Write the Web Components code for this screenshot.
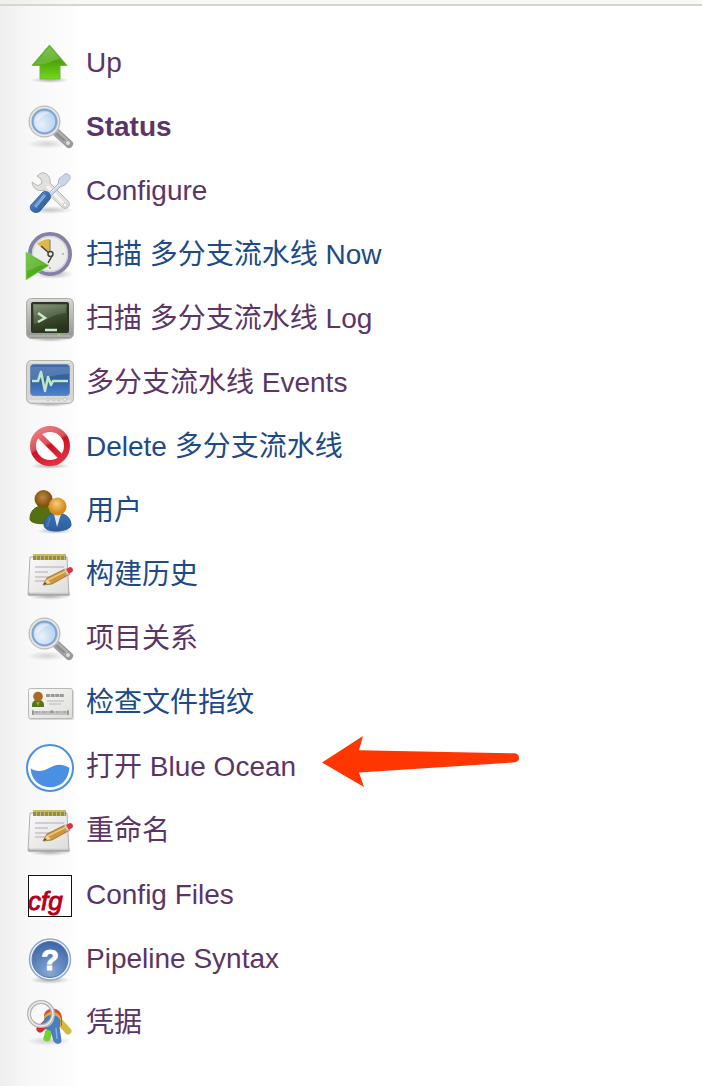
<!DOCTYPE html>
<html lang="zh-CN">
<head>
<meta charset="utf-8">
<meta name="viewport" content="width=device-width, initial-scale=1">
<title>多分支流水线</title>
<style>
  html, body { margin: 0; min-height: 100%; background: #fff; }
  body { font-family: "Liberation Sans", "Noto Sans CJK SC", sans-serif; }
</style>
</head>
<body>
<side-panel>
  <task-link icon="up">Up</task-link>
  <task-link icon="search" current>Status</task-link>
  <task-link icon="tools">Configure</task-link>
  <task-link icon="clock" fresh>扫描 多分支流水线 Now</task-link>
  <task-link icon="terminal">扫描 多分支流水线 Log</task-link>
  <task-link icon="monitor">多分支流水线 Events</task-link>
  <task-link icon="remove" fresh>Delete 多分支流水线</task-link>
  <task-link icon="users" fresh>用户</task-link>
  <task-link icon="notepad" fresh>构建历史</task-link>
  <task-link icon="search">项目关系</task-link>
  <task-link icon="card" fresh>检查文件指纹</task-link>
  <task-link icon="ocean">打开 Blue Ocean<callout-arrow slot="note"></callout-arrow></task-link>
  <task-link icon="notepad">重命名</task-link>
  <task-link icon="config">Config Files</task-link>
  <task-link icon="help">Pipeline Syntax</task-link>
  <task-link icon="keys">凭据</task-link>
</side-panel>

<script>
const shadowDef = '<radialGradient id="sh"><stop stop-color="#000" stop-opacity=".3"/><stop offset="1" stop-color="#000" stop-opacity="0"/></radialGradient>';

const icons = {
  up: `<defs>${shadowDef}<linearGradient id="g" x2="0" y2="1"><stop stop-color="#65b82b"/><stop offset=".5" stop-color="#4ea50c"/><stop offset="1" stop-color="#76d81c"/></linearGradient></defs>
    <ellipse cx="24" cy="40" rx="19" ry="3" fill="url(#sh)"/>
    <path d="M23.500 5 41 25.500H34V39H14V25.500H6Z" fill="url(#g)" stroke="#6fb544" stroke-linejoin="round"/>
    <path d="M23.500 7 8 24.500h7c9-1 13-5 19-6Z" fill="#fff" opacity=".17"/>`,
  search: `<defs>${shadowDef}<radialGradient id="g" cx=".4" cy=".6"><stop stop-color="#e9f2fb"/><stop offset="1" stop-color="#b9d2ee"/></radialGradient></defs>
    <ellipse cx="21" cy="40" rx="20" ry="5" fill="url(#sh)" opacity=".5"/>
    <path d="m30 28 13 12" stroke="#999" stroke-width="8" stroke-linecap="round"/>
    <path d="m30 28 12 11" stroke="#b4b4b4" stroke-width="5" stroke-linecap="round"/>
    <path d="m30 29 9 8" stroke="#909090" stroke-width="3"/>
    <circle cx="42" cy="39" r="2.500" fill="#ddd" stroke="#999"/>
    <circle cx="18.500" cy="17.500" r="14.500" fill="url(#g)" stroke="#bdbdbb" stroke-width="3"/>
    <circle cx="18.500" cy="17.500" r="14" fill="none" stroke="#e8e8e6" stroke-width="1.500"/>
    <circle cx="18.500" cy="17.500" r="11.800" fill="none" stroke="#7da4d4" stroke-width="2"/>
    <path d="M9 18C9 10 17 6 24 9c-8 1-10 8-15 9Z" fill="#fff" opacity=".4"/>`,
  tools: `<defs>${shadowDef}<linearGradient id="g" x2="1" y2="1"><stop stop-color="#7aa5d8"/><stop offset=".5" stop-color="#3d6fb0"/><stop offset="1" stop-color="#234f8c"/></linearGradient></defs>
    <ellipse cx="24" cy="42" rx="24" ry="4" fill="url(#sh)" opacity=".7"/>
    <path d="M15 5c6-1 10 4 9 10l18 18c4 5-2 10-6 6L18 22c-6 2-11-1-12-8l6 4 4-3-1-4-4-3Z" fill="#e0e0de" stroke="#b8b8b5" stroke-linejoin="round"/>
    <path d="m21 18 17 18" stroke="#f5f5f4" stroke-width="3"/>
    <path d="m22 26 10-10 1-5 6-5c3-1 6 2 5 5l-5 6-5 2-10 10Z" fill="#c9d6e6" stroke="#a5b4c8"/>
    <path d="m25 24 9-8" stroke="#edf3fa"/>
    <path d="M17 24c4-2 9 2 7 7L14 43c-5 4-12-1-9-6Z" fill="url(#g)" stroke="#34639f"/>
    <path d="m9 39 10-12" stroke="#8fb3e0" stroke-width="3" opacity=".8"/>
    <circle cx="39" cy="37" r="2" fill="#fff" stroke="#c5c5c5"/>`,
  clock: `<defs>${shadowDef}<linearGradient id="g" x2="1" y2="1"><stop stop-color="#65bd31"/><stop offset="1" stop-color="#3e9f09"/></linearGradient></defs>
    <ellipse cx="27" cy="42" rx="20" ry="5" fill="url(#sh)"/>
    <circle cx="24" cy="22" r="20" fill="#ededeb" stroke="#8481a5" stroke-width="4"/>
    <circle cx="24" cy="22" r="17.500" fill="none" stroke="#d4d3dd" stroke-width="1.500"/>
    <path d="M24 21 11 12c3-3 8-5 13-5Z" fill="#dfb849"/>
    <path d="M24 8v12" stroke="#777"/>
    <path d="m15 14 8 7m3 3-4 7" stroke="#444" stroke-width="1.500"/>
    <circle cx="24.500" cy="22" r="2.500" fill="#eee" stroke="#444" stroke-width="1.500"/>
    <circle cx="37" cy="22" r="1" fill="#aaa"/><circle cx="24" cy="36" r="1" fill="#999"/>
    <path d="M0 20 23 33.500 0 48Z" fill="url(#g)" stroke="#9cd381" stroke-width=".8"/>
    <path d="M1 22 20 33C11 33 6 38 1 39Z" fill="#fff" opacity=".15"/>`,
  terminal: `<defs>${shadowDef}<linearGradient id="g" x2=".3" y2="1"><stop stop-color="#768667"/><stop offset=".5" stop-color="#40522f"/><stop offset="1" stop-color="#27351b"/></linearGradient><linearGradient id="b" x2="0" y2="1"><stop stop-color="#d5d6d1"/><stop offset="1" stop-color="#92948e"/></linearGradient></defs>
    <ellipse cx="24" cy="43" rx="22" ry="3" fill="url(#sh)"/>
    <rect x=".5" y="2.500" width="47" height="40" rx="5" fill="url(#b)" stroke="#abada7"/>
    <path d="M3 4h42M3 40h42" stroke="#ecece9" opacity=".5"/>
    <rect x="6" y="7" width="36" height="29" rx="1" fill="url(#g)" stroke="#2d3328" stroke-width="2"/>
    <path d="M8 9h32v8C24 18 22 25 8 28Z" fill="#fff" opacity=".15"/>
    <path d="m12 17 7 5-7 4m7 8h12" fill="none" stroke="#c9e9cc" stroke-width="2.500"/>
    <circle cx="33" cy="39" r="1.300" fill="#8fdc50"/>`,
  monitor: `<defs>${shadowDef}<linearGradient id="g" x2="0" y2="1"><stop stop-color="#426cad"/><stop offset=".5" stop-color="#315f9f"/><stop offset="1" stop-color="#4c83d2"/></linearGradient></defs>
    <ellipse cx="24" cy="44" rx="22" ry="3" fill="url(#sh)"/>
    <rect x=".5" y=".5" width="47" height="43" rx="5" fill="#d6d7d3" stroke="#b2b4ae"/>
    <path d="M4 2h40M3 41h42" stroke="#f3f3f1"/>
    <rect x="4.500" y="4.500" width="39" height="31" rx="3" fill="url(#g)" stroke="#6d87ae"/>
    <path d="M5 7h38v7C27 14 16 20 5 20Z" fill="#fff" opacity=".14"/>
    <path d="M6 21h6l3-9 4 19 3-14 3 8 2-4h15" fill="none" stroke="#bfe6c5" stroke-width="2.500" stroke-linejoin="round"/>
    <g fill="#e9e9e6" stroke="#b6b7b1" stroke-width=".7"><circle cx="22" cy="39.500" r="1.300"/><circle cx="28" cy="39.500" r="1.300"/><circle cx="33" cy="39.500" r="1.300"/><circle cx="39" cy="39.500" r="1.700"/></g>`,
  remove: `<defs>${shadowDef}<linearGradient id="g" x1="10" y1="2" x2="30" y2="42" gradientUnits="userSpaceOnUse"><stop stop-color="#ef8585"/><stop offset=".46" stop-color="#dc5058"/><stop offset=".52" stop-color="#cd1022"/><stop offset="1" stop-color="#e33643"/></linearGradient></defs>
    <ellipse cx="24" cy="42" rx="20" ry="3" fill="url(#sh)"/>
    <circle cx="24" cy="22" r="17" fill="#fff" stroke="url(#g)" stroke-width="6"/>
    <path d="m12 10 24 24" stroke="url(#g)" stroke-width="6"/>`,
  users: `<defs>${shadowDef}<radialGradient id="br" cx=".45" cy=".4"><stop stop-color="#bd8840"/><stop offset="1" stop-color="#80500d"/></radialGradient><radialGradient id="or" cx=".45" cy=".35"><stop stop-color="#f7cc7c"/><stop offset="1" stop-color="#d68a1c"/></radialGradient><linearGradient id="bl" x2="0" y2="1"><stop stop-color="#3f73b5"/><stop offset="1" stop-color="#2d5d9d"/></linearGradient></defs>
    <ellipse cx="29" cy="43" rx="18" ry="3" fill="url(#sh)"/>
    <path d="M4 31c0-8 5-13 13-13s12 6 11 14c-7 6-24 4-24-1Z" fill="#567011" stroke="#456009"/>
    <circle cx="17.500" cy="11" r="9" fill="url(#br)"/>
    <path d="M18 37c0-8 6-12 13-12s14 4 14 12c0 7-27 9-27 0Z" fill="url(#bl)" stroke="#2b5996"/>
    <path d="m28 26 3 13 4-13Z" fill="#dce9f6"/>
    <path d="m21 39 3-9" stroke="#699bd4" stroke-width="2" opacity=".4"/>
    <circle cx="31.500" cy="18.500" r="9" fill="url(#or)"/>`,
  notepad: `<defs>${shadowDef}<linearGradient id="g" x2="1" y2="1"><stop stop-color="#fafafa"/><stop offset="1" stop-color="#dcdcdb"/></linearGradient></defs>
    <ellipse cx="24" cy="44" rx="22" ry="4" fill="url(#sh)"/>
    <path d="M4 5h37l2 38H2Z" fill="url(#g)" stroke="#b0b0b0" stroke-linejoin="round"/>
    <path d="M2.500 42h41" stroke="#a8a8a6" stroke-width="3"/>
    <path d="M3.500 41h39" stroke="#eee"/>
    <path d="M7 5h33" stroke="#c2b97a" stroke-width="6"/>
    <path d="M7 5h33" stroke="#968f3c" stroke-width="6" stroke-dasharray="3 1"/>
    <path d="M7 3h33" stroke="#cabe48" stroke-width="2" stroke-dasharray="3 1"/>
    <path d="M9 15h29M9 20h13M9 25h26M9 29h13" stroke="#c4c4c4" stroke-width="1.500"/>
    <path d="m17 33 4-7 18-9 5 5-18 10Z" fill="#cd963e" stroke="#9a6b2b" stroke-width=".8"/>
    <path d="m22 28 18-9" stroke="#edc879" stroke-width="1.500"/>
    <path d="m17 33 4-6 4 4Z" fill="#ead3a5"/><path d="m17 33 2-3 2 2Z" fill="#554735"/>
    <path d="m38 17 3 6 3-1-2-6Z" fill="#ccc"/>
    <path d="m40 17 4-2c3 0 4 4 2 5l-3 2Z" fill="#d9363f"/>`,
  card: `<defs><linearGradient id="g" x2="1" y2="1"><stop stop-color="#fafafa"/><stop offset="1" stop-color="#deded9"/></linearGradient></defs>
    <rect x="3" y="10" width="45" height="30" rx="2" fill="#999" opacity=".35"/>
    <rect x="2.500" y="8.500" width="44" height="30" rx="2" fill="url(#g)" stroke="#b8b8b5"/>
    <path d="M6 25c0-7 12-7 12 0v2H6Z" fill="#54751b"/>
    <circle cx="12" cy="16.500" r="4.800" fill="#a96a25"/>
    <path d="M10 22h4l-2 4Z" fill="#8caa4f"/>
    <path d="M20 15.500h18" stroke="#999" stroke-width="3" stroke-dasharray="4 .6"/>
    <path d="M21 21h17M23 24h12" stroke="#c7c7c7" stroke-width="1.500"/>
    <path d="M6 33h37" stroke="#c2c2c2" stroke-width="4"/><path d="M6 32h37" stroke="#909090" stroke-dasharray="1 2 3 1"/><path d="M7 30v5m19-5v3m16-3v5" stroke="#777"/>`,
  ocean: `<circle cx="24" cy="24" r="23" fill="#fff" stroke="#4a90e2" stroke-width="2"/>
    <path d="M4.700 24.300c5 4 13 3 18 0 6-3 11-6 20.600-.6C43 35 35 43.300 24 43.300S5 35 4.700 24.300Z" fill="#4a90e2"/>`,
  config: `<rect x="2.500" y="3.500" width="43" height="41" fill="#fff" stroke="#111"/>
    <text x="2" y="38" font-family="Liberation Sans, sans-serif" font-size="26" font-style="italic" fill="#b40018" stroke="#b40018">cfg</text>`,
  help: `<defs>${shadowDef}<radialGradient id="g" cx=".5" cy=".85" r=".8"><stop stop-color="#86a9d5"/><stop offset="1" stop-color="#3f68a7"/></radialGradient></defs>
    <ellipse cx="24" cy="44" rx="20" ry="4" fill="url(#sh)"/>
    <circle cx="24" cy="23.500" r="20.500" fill="#eef3f9" stroke="#8fa8cb" stroke-width="1.500"/>
    <circle cx="24" cy="23.500" r="18" fill="url(#g)" stroke="#557cb4"/>
    <text x="24" y="34" text-anchor="middle" font-family="Liberation Sans, sans-serif" font-size="29" font-weight="bold" fill="#fff" stroke="#fff">?</text>`,
  keys: `<defs>${shadowDef}</defs>
    <ellipse cx="23" cy="41" rx="22" ry="5" fill="url(#sh)" opacity=".6"/>
    <path d="m22 22-8 7" stroke="#da2836" stroke-width="7" stroke-linecap="round"/>
    <path d="m32 20 10 11" stroke="#d7b844" stroke-width="7" stroke-linecap="round"/>
    <path d="M25 24 21 38" stroke="#78cf35" stroke-width="7" stroke-linecap="round"/>
    <path d="M18 15c2-9 17-9 18 3v8H20Z" fill="#d94c3c"/>
    <path d="M18 18c2-8 15-8 17 1v7H20Z" fill="#d9ad3d"/>
    <path d="M18 20c2-7 14-7 16 1v6H20Z" fill="#76b53c"/>
    <path d="M18 21c2-7 14-7 16 0l-1 6 2 14c0 3-6 3-7 0l-3-11c-5 0-8-4-7-9Z" fill="#4a7fc2" stroke="#4676b5"/>
    <path d="m30 28 1 11" stroke="#86afe2" stroke-width="1.500"/>
    <path d="M20 26c4-1 6-4 7-8" fill="none" stroke="#ddd" stroke-width="2.500"/>
    <circle cx="15" cy="14" r="12" fill="none" stroke="#b4b4b4" stroke-width="4"/>
    <circle cx="15" cy="14" r="12" fill="none" stroke="#eee" stroke-width="1.500"/>`
};

customElements.define('task-icon', class extends HTMLElement {
  connectedCallback() {
    if (this.shadowRoot) return;
    this.attachShadow({ mode: 'open' }).innerHTML = `
      <style>:host { display: block; flex: none; width: 48px; height: 48px; } svg { display: block; overflow: visible; }</style>
      <svg width="48" height="48" viewBox="0 0 48 48" fill="none" aria-hidden="true">${icons[this.getAttribute('name')] || ''}</svg>`;
  }
});

customElements.define('callout-arrow', class extends HTMLElement {
  constructor() {
    super();
    this.attachShadow({ mode: 'open' }).innerHTML = `
      <style>:host { display: block; } svg { display: block; }</style>
      <svg width="198" height="52" viewBox="0 0 198 52" aria-hidden="true">
        <path d="M0 26.500 41 0 37 14.300 190 17.300C195 17 197 19 197 22S195 26 191 26.500L37 36.500 42 51Z" fill="#ff3502"/>
      </svg>`;
  }
});

customElements.define('task-link', class extends HTMLElement {
  connectedCallback() {
    if (this.shadowRoot) return;
    this.attachShadow({ mode: 'open' }).innerHTML = `
      <style>
        :host { display: block; position: relative; color: #5c3566; }
        :host([fresh]) { color: #204a87; }
        :host([current]) { font-weight: bold; }
        a { display: flex; align-items: center; gap: 12px; color: inherit; text-decoration: none; }
        span { padding-bottom: 2px; font-size: 28px; line-height: 32px; }
        ::slotted([slot="note"]) { position: absolute; left: 296px; top: -8px; }
      </style>
      <a href="#"><task-icon name="${this.getAttribute('icon')}"></task-icon><span><slot></slot></span></a>
      <slot name="note"></slot>`;
  }
});

customElements.define('side-panel', class extends HTMLElement {
  constructor() {
    super();
    this.attachShadow({ mode: 'open' }).innerHTML = `
      <style>
        :host { display: block; min-height: 100vh; box-sizing: border-box;
          background: linear-gradient(to right, #efefef, #f8f8f8 32px, #fdfdfd 76px, #fff 78px); }
        header { height: 4px; background: linear-gradient(to right, #edf0e8, #f6faf2 78px); border-bottom: 2px solid #d3d7cf; }
        nav { display: flex; flex-direction: column; gap: 16px; padding: 34px 26px 38px; }
      </style>
      <header></header>
      <nav><slot></slot></nav>`;
  }
});
</script>
</body>
</html>
